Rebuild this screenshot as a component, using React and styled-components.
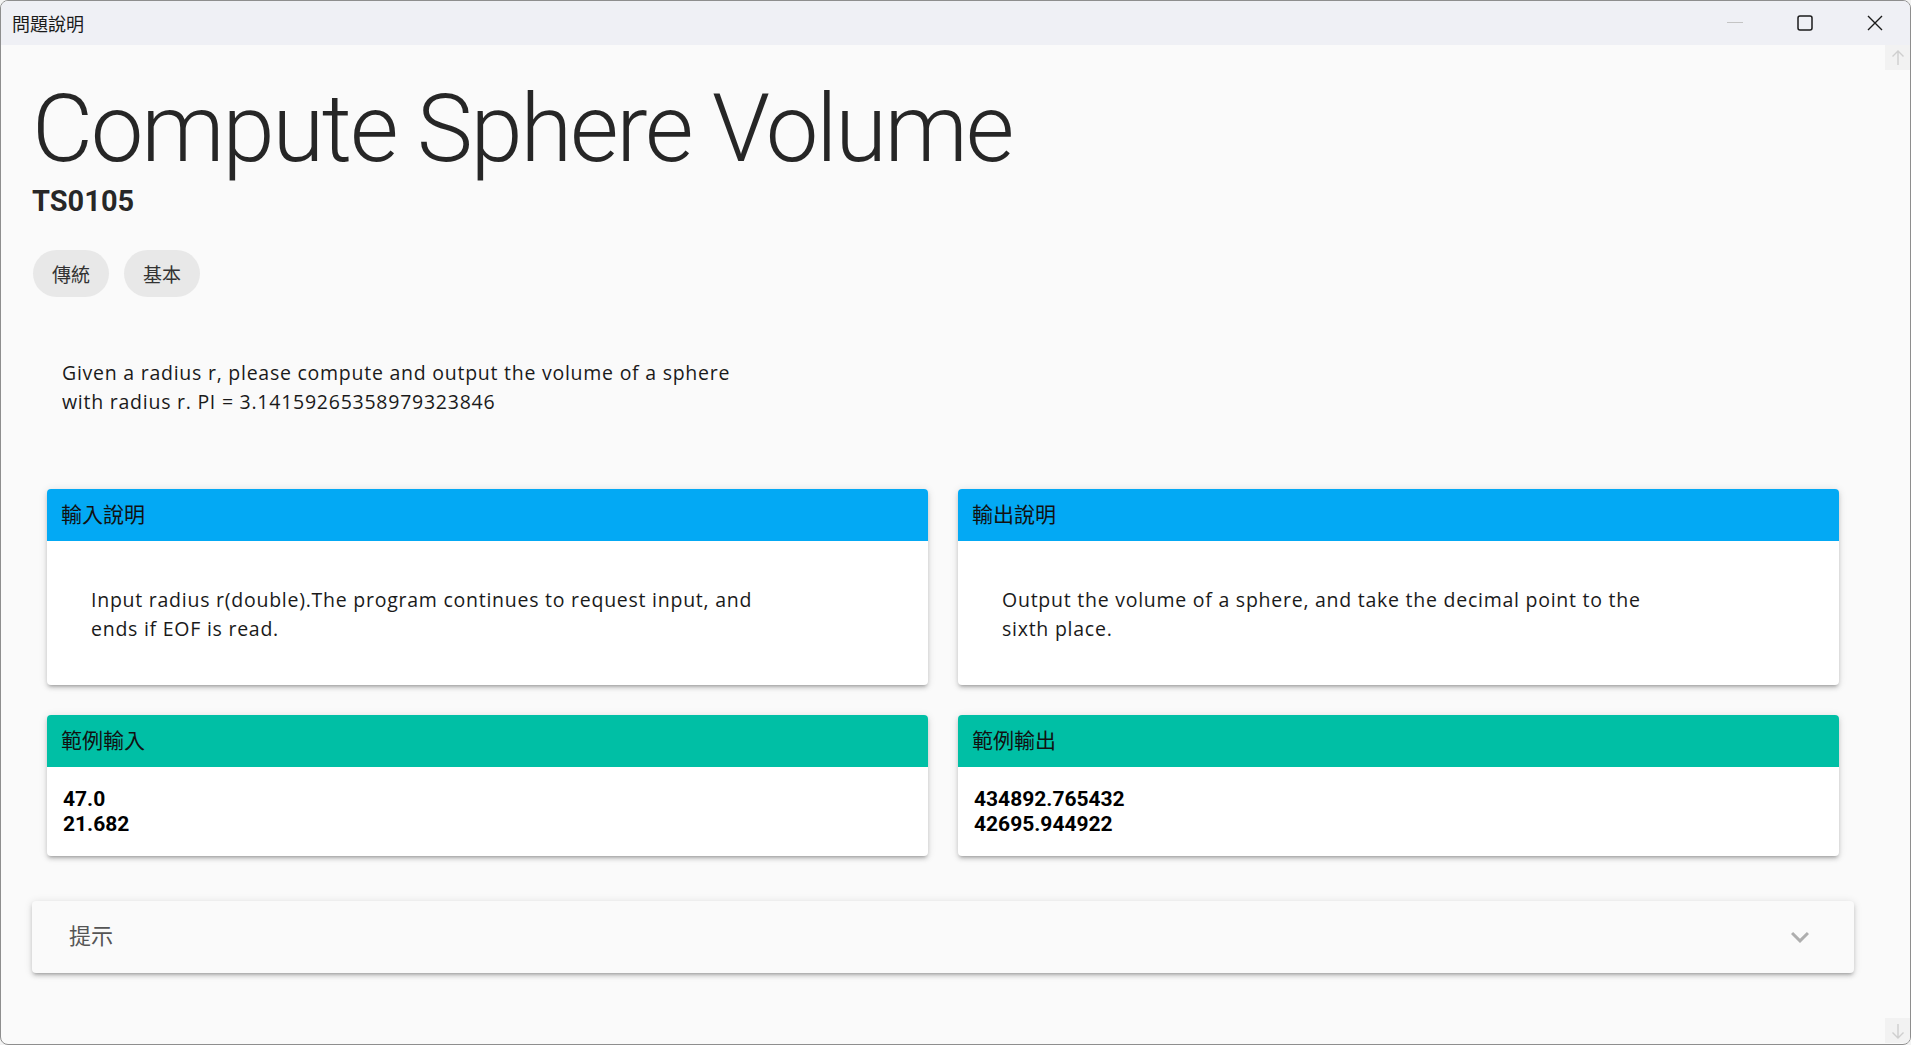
import React from "react";
import styled, { createGlobalStyle } from "styled-components";

const GlobalStyle = createGlobalStyle`
	html, body {
		margin: 0;
		height: 100%;
		overflow: hidden;
		background: #f3f3f3;
	}
	#root {
		height: 100%;
	}
	* {
		box-sizing: border-box;
	}
`;

const cjk = `"Noto Sans CJK TC", "Noto Sans CJK SC", sans-serif`;
const bodyFont = `"Open Sans", Lato, "Noto Sans CJK TC", sans-serif`;

const Window = styled.div`
	height: 100%;
	display: flex;
	flex-direction: column;
	border: 1px solid #8e8e8e;
	border-radius: 8px;
	overflow: hidden;
	background: #fafafa;
`;

const TitleBar = styled.div`
	height: 44px;
	flex-shrink: 0;
	display: flex;
	align-items: center;
	background: #eff0f5;
`;

const WindowTitle = styled.div`
	flex: 1;
	padding-left: 11px;
	font-family: ${cjk};
	font-size: 18px;
	color: #1b1b1b;
`;

const CaptionButton = styled.div`
	width: 70px;
	height: 44px;
	display: flex;
	align-items: center;
	justify-content: center;
	color: ${(p) => (p.disabled ? "#c4c4c4" : "#1b1b1b")};
`;

const Body = styled.div`
	flex: 1;
	display: flex;
	min-height: 0;
`;

const Content = styled.div`
	flex: 1;
	padding: 28px 31px 0 31px;
	overflow: hidden;
`;

const ScrollRail = styled.div`
	width: 25px;
	flex-shrink: 0;
	display: flex;
	flex-direction: column;
	justify-content: space-between;
	padding-bottom: 1px;
`;

const ScrollArrow = styled.div`
	height: 25px;
	display: flex;
	align-items: center;
	justify-content: center;
	background: #f2f2f2;
	color: #cfcfcf;
`;

const Title = styled.h1`
	margin: 0;
	font-family: Roboto, "Liberation Sans", sans-serif;
	font-weight: 300;
	font-size: 94px;
	line-height: 110px;
	letter-spacing: -2.2px;
	color: rgba(0, 0, 0, 0.85);
	padding-top: 1px;
`;

const Code = styled.div`
	font-family: Roboto, "Liberation Sans", sans-serif;
	font-weight: 700;
	font-size: 29px;
	line-height: 35px;
	color: rgba(0, 0, 0, 0.85);
`;

const ChipRow = styled.div`
	display: flex;
	gap: 15px;
	margin-top: 31px;
	margin-left: 1px;
`;

const Chip = styled.span`
	height: 47px;
	padding: 0 19px;
	display: inline-flex;
	align-items: center;
	border-radius: 24px;
	background: #e8e8e8;
	font-family: ${cjk};
	font-size: 19px;
	color: #333;
`;

const Description = styled.p`
	margin: 61px 0 0 30px;
	font-family: ${bodyFont};
	font-size: 19.5px;
	line-height: 29px;
	letter-spacing: 0.75px;
	color: #1a1a1a;
`;

const CardGrid = styled.div`
	display: grid;
	grid-template-columns: 1fr 1fr;
	gap: 30px;
	padding: 0 15px;
	margin-top: 73px;
`;

const Card = styled.div`
	background: #fff;
	border-radius: 4px;
	overflow: hidden;
	box-shadow: 0 3px 3px -2px rgba(0, 0, 0, 0.2), 0 3px 4px 0 rgba(0, 0, 0, 0.14),
		0 1px 8px 0 rgba(0, 0, 0, 0.12);
`;

const CardHeader = styled.div`
	height: 52px;
	display: flex;
	align-items: center;
	padding: 0 0 4px 14px;
	background: ${(p) => (p.sample ? "#00bfa5" : "#03a9f4")};
	font-family: ${cjk};
	font-size: 21px;
	line-height: 1;
	color: #111;
`;

const CardText = styled.div`
	padding: 44px 44px 42px;
	font-family: ${bodyFont};
	font-size: 19.5px;
	line-height: 29px;
	letter-spacing: 0.75px;
	color: #1a1a1a;
`;

const SampleText = styled.pre`
	margin: 0;
	padding: 20px 16px 19px;
	font-family: Roboto, "Liberation Sans", sans-serif;
	font-weight: 700;
	font-size: 21px;
	line-height: 25px;
	color: #000;
`;

const Hint = styled.div`
	height: 72px;
	margin-top: 45px;
	display: flex;
	align-items: center;
	justify-content: space-between;
	padding: 0 36px 0 37px;
	border-radius: 4px;
	background: #fafafa;
	box-shadow: 0 3px 3px -2px rgba(0, 0, 0, 0.2), 0 3px 4px 0 rgba(0, 0, 0, 0.14),
		0 1px 8px 0 rgba(0, 0, 0, 0.12);
`;

const HintLabel = styled.span`
	font-family: ${cjk};
	font-size: 22px;
	line-height: 1;
	padding-bottom: 6px;
	color: #555;
`;

const ExpandIcon = () => (
	<svg width="36" height="36" viewBox="0 0 24 24" fill="rgba(0,0,0,0.3)">
		<path d="M16.59 8.59 12 13.17 7.41 8.59 6 10l6 6 6-6z" />
	</svg>
);

const Arrow = ({ down }) => (
	<svg width="14" height="16" viewBox="0 0 14 16" fill="none" stroke="currentColor" strokeWidth="1.4"
		style={down ? { transform: "rotate(180deg)" } : undefined}>
		<path d="M7 15V1M1.5 6.5 7 1l5.5 5.5" />
	</svg>
);

const App = () => {
	return (
		<>
			<GlobalStyle />
			<Window>
				<TitleBar>
					<WindowTitle>問題說明</WindowTitle>
					<CaptionButton disabled>
						<svg width="16" height="2" viewBox="0 0 16 2">
							<rect width="16" height="1" fill="currentColor" />
						</svg>
					</CaptionButton>
					<CaptionButton>
						<svg width="16" height="16" viewBox="0 0 16 16" fill="none" stroke="currentColor" strokeWidth="1.5">
							<rect x="1" y="1" width="14" height="14" rx="2" />
						</svg>
					</CaptionButton>
					<CaptionButton>
						<svg width="16" height="16" viewBox="0 0 16 16" fill="none" stroke="currentColor" strokeWidth="1.4">
							<path d="M1 1l14 14M15 1 1 15" />
						</svg>
					</CaptionButton>
				</TitleBar>
				<Body>
					<Content>
						<Title>Compute Sphere Volume</Title>
						<Code>TS0105</Code>
						<ChipRow>
							<Chip>傳統</Chip>
							<Chip>基本</Chip>
						</ChipRow>
						<Description>
							Given a radius r, please compute and output the volume of a sphere
							<br />
							with radius r. PI = 3.14159265358979323846
						</Description>
						<CardGrid>
							<Card>
								<CardHeader>輸入說明</CardHeader>
								<CardText>
									Input radius r(double).The program continues to request input, and
									<br />
									ends if EOF is read.
								</CardText>
							</Card>
							<Card>
								<CardHeader>輸出說明</CardHeader>
								<CardText>
									Output the volume of a sphere, and take the decimal point to the
									<br />
									sixth place.
								</CardText>
							</Card>
							<Card>
								<CardHeader sample>範例輸入</CardHeader>
								<SampleText>{"47.0\n21.682"}</SampleText>
							</Card>
							<Card>
								<CardHeader sample>範例輸出</CardHeader>
								<SampleText>{"434892.765432\n42695.944922"}</SampleText>
							</Card>
						</CardGrid>
						<Hint>
							<HintLabel>提示</HintLabel>
							<ExpandIcon />
						</Hint>
					</Content>
					<ScrollRail>
						<ScrollArrow>
							<Arrow />
						</ScrollArrow>
						<ScrollArrow>
							<Arrow down />
						</ScrollArrow>
					</ScrollRail>
				</Body>
			</Window>
		</>
	);
};

export default App;
